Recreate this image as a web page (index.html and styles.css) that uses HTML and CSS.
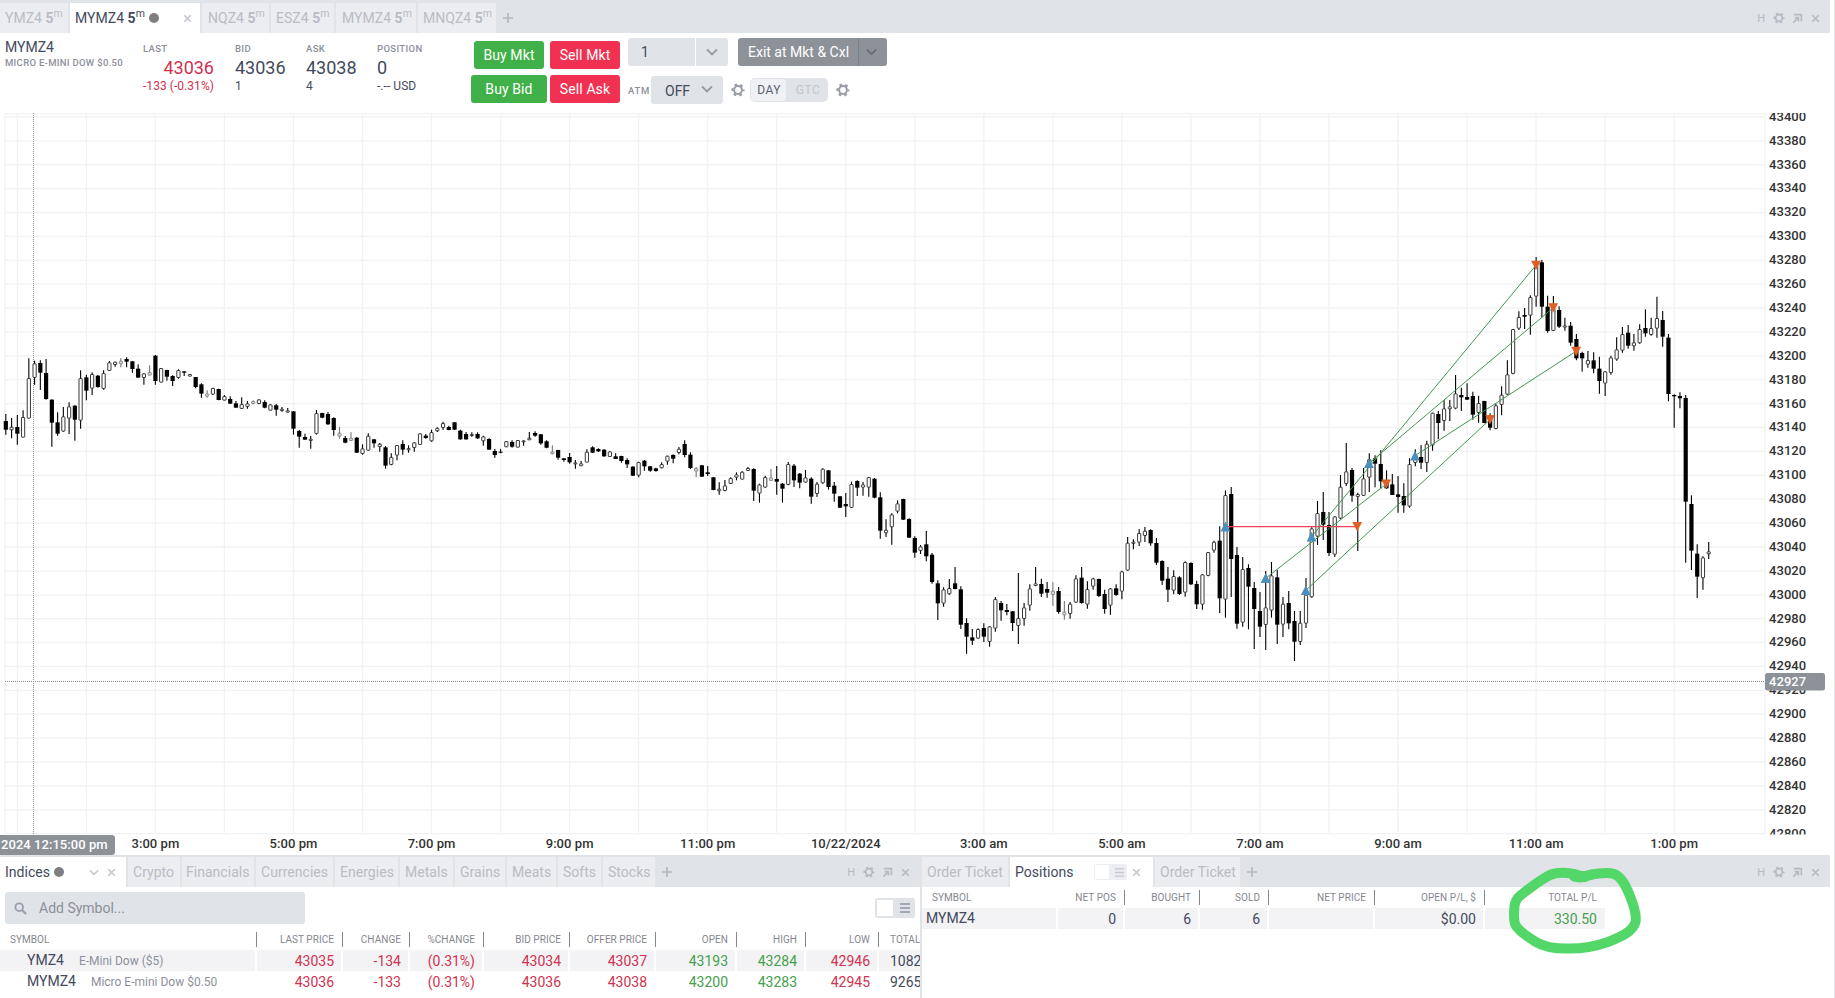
FILE: index.html
```html
<!DOCTYPE html>
<html lang="en">
<head>
<meta charset="utf-8">
<title>MYMZ4 – Trading workspace</title>
<link rel="stylesheet" href="styles.css">
</head>
<body>
<svg width="0" height="0" class="defs">
  <defs>
    <symbol id="gear" viewBox="0 0 14 14"><circle cx="7" cy="7" r="3.9" fill="none" stroke="currentColor" stroke-width="2"/><circle cx="7" cy="7" r="5.6" fill="none" stroke="currentColor" stroke-width="2" stroke-dasharray="2.8 3.064" stroke-dashoffset="1.4"/></symbol>
    <symbol id="popout" viewBox="0 0 12 12"><path d="M2 1.8h8.2V9M1.5 10.5L6.8 5.2M2.8 5h4.2v4.2" fill="none" stroke="currentColor" stroke-width="1.8"/></symbol>
    <symbol id="close" viewBox="0 0 10 10"><path d="M1.4 1.4l7.2 7.2M8.6 1.4L1.4 8.6" fill="none" stroke="currentColor" stroke-width="1.9"/></symbol>
    <symbol id="plus" viewBox="0 0 12 12"><path d="M6 1v10M1 6h10" fill="none" stroke="currentColor" stroke-width="1.7"/></symbol>
    <symbol id="chev" viewBox="0 0 12 8"><path d="M1 1.3l5 5 5-5" fill="none" stroke="currentColor" stroke-width="1.9"/></symbol>
    <symbol id="menu" viewBox="0 0 10 10"><path d="M0 1h10M0 5h10M0 9h10" fill="none" stroke="currentColor" stroke-width="1.5"/></symbol>
    <symbol id="search" viewBox="0 0 14 14"><circle cx="5.6" cy="5.6" r="4.1" fill="none" stroke="currentColor" stroke-width="2"/><path d="M8.6 8.6l4.4 4.4" stroke="currentColor" stroke-width="2.3"/></symbol>
  </defs>
</svg>

<div class="app">
  <div class="tabbar tabbar-top">
    <div class="tab t-ymz">YMZ4 <b>5</b><sup>m</sup></div>
    <div class="tab active t-mymz">MYMZ4 <b>5</b><sup>m</sup><i class="dot"></i><svg class="x"><use href="#close"/></svg></div>
    <div class="tab t-nqz">NQZ4 <b>5</b><sup>m</sup></div>
    <div class="tab t-esz">ESZ4 <b>5</b><sup>m</sup></div>
    <div class="tab t-mym2">MYMZ4 <b>5</b><sup>m</sup></div>
    <div class="tab t-mnq">MNQZ4 <b>5</b><sup>m</sup></div>
    <svg class="plus"><use href="#plus"/></svg>
    <div class="tools"><span>H</span><svg class="g"><use href="#gear"/></svg><svg class="p"><use href="#popout"/></svg><svg class="c"><use href="#close"/></svg></div>
  </div>

  <div class="header">
    <div class="instrument"><div class="name">MYMZ4</div><div class="desc">MICRO E-MINI DOW $0.50</div></div>
    <div class="quote q-last"><label>LAST</label><strong>43036</strong><span>-133 (-0.31%)</span></div>
    <div class="quote q-bid"><label>BID</label><strong>43036</strong><span>1</span></div>
    <div class="quote q-ask"><label>ASK</label><strong>43038</strong><span>4</span></div>
    <div class="quote q-pos"><label>POSITION</label><strong>0</strong><span>-.-- USD</span></div>
    <div class="orders buy"><button class="short">Buy Mkt</button><button>Buy Bid</button></div>
    <div class="orders sell"><button>Sell Mkt</button><button>Sell Ask</button></div>
    <div class="controls">
      <div class="row">
        <div class="qty"><span>1</span><em><svg class="chev"><use href="#chev"/></svg></em></div>
        <div class="exit"><span>Exit at Mkt &amp; Cxl</span><em><svg class="chev"><use href="#chev"/></svg></em></div>
      </div>
      <div class="row">
        <span class="atm">ATM</span>
        <div class="select"><span>OFF</span><svg class="chev"><use href="#chev"/></svg></div>
        <svg class="gear first"><use href="#gear"/></svg>
        <div class="tif"><span class="on">DAY</span><span>GTC</span></div>
        <svg class="gear second"><use href="#gear"/></svg>
      </div>
    </div>
  </div>

  <svg class="chart" id="chart" viewBox="0 113 1830 742" width="1830" height="742"></svg>

  <div class="bottom">
    <section class="watch">
      <div class="tabbar">
        <div class="tab active b-ind">Indices<i class="dot"></i><svg class="chev"><use href="#chev"/></svg><svg class="x"><use href="#close"/></svg></div>
        <div class="tab b-cry">Crypto</div>
        <div class="tab b-fin">Financials</div>
        <div class="tab b-cur">Currencies</div>
        <div class="tab b-ene">Energies</div>
        <div class="tab b-met">Metals</div>
        <div class="tab b-gra">Grains</div>
        <div class="tab b-mea">Meats</div>
        <div class="tab b-sof">Softs</div>
        <div class="tab b-sto">Stocks</div>
        <svg class="plus"><use href="#plus"/></svg>
        <div class="tools"><span>H</span><svg class="g"><use href="#gear"/></svg><svg class="p"><use href="#popout"/></svg><svg class="c"><use href="#close"/></svg></div>
      </div>
      <div class="searchrow">
        <div class="search"><svg><use href="#search"/></svg>Add Symbol...</div>
        <div class="toggle"><i></i><svg><use href="#menu"/></svg></div>
      </div>
      <div class="grid wgrid head">
        <div class="first">SYMBOL</div><div>LAST PRICE</div><div>CHANGE</div><div>%CHANGE</div><div>BID PRICE</div><div>OFFER PRICE</div><div>OPEN</div><div>HIGH</div><div>LOW</div><div class="last">TOTAL</div>
      </div>
      <div class="grid wgrid body shaded">
        <div class="first">YMZ4<small>E-Mini Dow ($5)</small></div><div class="red">43035</div><div class="red">-134</div><div class="red">(0.31%)</div><div class="red">43034</div><div class="red">43037</div><div class="green">43193</div><div class="green">43284</div><div class="red">42946</div><div class="last">1082</div>
      </div>
      <div class="grid wgrid body">
        <div class="first">MYMZ4<small>Micro E-mini Dow $0.50</small></div><div class="red">43036</div><div class="red">-133</div><div class="red">(0.31%)</div><div class="red">43036</div><div class="red">43038</div><div class="green">43200</div><div class="green">43283</div><div class="red">42945</div><div class="last">9265</div>
      </div>
    </section>
    <section class="positions">
      <div class="tabbar">
        <div class="tab p-ot1">Order Ticket</div>
        <div class="tab active p-pos">Positions<span class="toggle mini"><i></i><svg><use href="#menu"/></svg></span><svg class="x"><use href="#close"/></svg></div>
        <div class="tab p-ot2">Order Ticket</div>
        <svg class="plus"><use href="#plus"/></svg>
        <div class="tools"><span>H</span><svg class="g"><use href="#gear"/></svg><svg class="p"><use href="#popout"/></svg><svg class="c"><use href="#close"/></svg></div>
      </div>
      <div class="grid pgrid head">
        <div class="first">SYMBOL</div><div>NET POS</div><div>BOUGHT</div><div>SOLD</div><div>NET PRICE</div><div>OPEN P/L, $</div><div class="last">TOTAL P/L</div>
      </div>
      <div class="grid pgrid body shaded">
        <div class="first">MYMZ4</div><div>0</div><div>6</div><div>6</div><div></div><div>$0.00</div><div class="last green">330.50</div>
      </div>
    </section>
  </div>
</div>

<svg class="marker" viewBox="1500 860 150 100" width="150" height="100">
  <path d="M1514.5 906C1515 901 1517 898 1521 895C1530 888 1540 880 1549 875.5C1556 872 1565 872.6 1571 873.4C1577 874 1580 876.5 1584 876C1590 875 1604 871.500 1613 873.600C1621 875.500 1626 886 1630 896C1634 906 1637 915 1635.500 922C1633 932 1620 937 1608 942C1594 947 1579 948.800 1567 948.600C1553 948.600 1544 947 1536 942C1528 937 1518 930 1515.500 925C1513 920 1514.200 911 1514.500 906Z" fill="none" stroke="#53d769" stroke-width="10" stroke-linejoin="round"/>
  <path d="M1574 876.500Q1582 879 1592 874.500" fill="none" stroke="#53d769" stroke-width="10" stroke-linecap="round"/>
</svg>
<script src="chart.js"></script>
</body>
</html>
```

FILE: styles.css
```css
* { box-sizing: border-box; }
html, body { margin: 0; height: 998px; overflow: hidden; }
body { width: 1835px; background: #fff; font-family: Roboto, "Liberation Sans", sans-serif; font-size: 14px; color: #434a5c; border-right: 1px solid #e2e4ea; }
svg { display: block; flex: none; }
.defs { position: absolute; }
.app { width: 1830px; height: 998px; overflow: hidden; }

/* tab bars */
.tabbar { display: flex; align-items: flex-end; height: 32px; background: #e0e3e8; gap: 2px; color: #b9bcc4; }
.tabbar-top { height: 33px; }
.tab { height: 30px; display: flex; align-items: center; padding-left: 6px; background: #ecedf0; flex: none; letter-spacing: .03px; white-space: pre; }
.tab b { font-weight: 700; }
.tab sup { font-size: 10.5px; line-height: 1; position: relative; top: -4px; vertical-align: baseline; }
.tab.active { background: #fff; color: #434a5c; padding-left: 5px; }
.dot { width: 10px; height: 10px; border-radius: 50%; background: #7f7f7f; margin-left: 4px; }
.tab .x { width: 9px; height: 9px; color: #c4c7ce; margin-left: auto; }
.tab .chev { width: 10px; height: 7px; color: #c4c7ce; margin-left: auto; }
.plus { width: 12px; height: 12px; color: #b4b8c0; margin: 0 0 9px 4px; }
.tools { margin-left: auto; height: 30px; display: flex; align-items: center; color: #b6bac5; font-size: 11px; padding-right: 10px; }
.tools .g { width: 12px; height: 12px; margin-left: 8px; }
.tools .p { width: 11px; height: 11px; margin-left: 7px; }
.tools .c { width: 9px; height: 9px; margin-left: 8px; }
.t-ymz { width: 68px; padding-left: 5px; }
.t-mymz { width: 130px; padding-right: 8px; }
.t-nqz { width: 67px; }
.t-esz { width: 63px; padding-left: 5px; }
.t-mym2 { width: 80px; }
.t-mnq { width: 78px; padding-left: 5px; }

/* quote header */
.header { height: 80px; display: flex; }
.instrument { width: 143px; padding: 6px 0 0 5px; white-space: nowrap; }
.name { line-height: 16px; }
.desc { font-size: 9.5px; line-height: 12px; margin-top: 2px; letter-spacing: .31px; color: #8d909b; font-weight: 500; }
.quote { display: flex; flex-direction: column; white-space: nowrap; padding-top: 10px; }
.quote label { font-size: 9.5px; line-height: 12px; letter-spacing: .35px; color: #8d909b; font-weight: 500; }
.quote strong { font-size: 18px; line-height: 20px; font-weight: 400; margin-top: 3px; }
.quote span { font-size: 12px; line-height: 14px; margin-top: 1px; letter-spacing: .05px; }
.q-last { width: 71px; margin-right: 21px; color: #d0324f; }
.q-last strong { text-align: right; }
.q-bid { width: 71px; }
.q-ask { width: 71px; }
.q-pos { width: 94px; }
.orders { display: flex; flex-direction: column; align-items: center; gap: 6px; padding-top: 8px; margin-right: 3px; }
.orders button { font: 14px Roboto, sans-serif; letter-spacing: .1px; color: #fff; border: 0; border-radius: 3px; height: 28px; width: 76px; padding: 0; background: #3fb148; }
.orders button.short { width: 70px; }
.orders.sell button { width: 70px; background: #f03152; }
.controls { display: flex; flex-direction: column; gap: 10px; padding: 5px 0 0 5px; }
.row { display: flex; align-items: center; height: 28px; }
.qty, .exit { display: flex; height: 28px; border-radius: 3px; overflow: hidden; line-height: 28px; }
.qty { width: 100px; background: #e0e3e8; margin-right: 10px; }
.qty span { width: 68px; padding-left: 13px; border-right: 1px solid #fff; }
.qty em, .exit em { flex: 1; display: flex; align-items: center; justify-content: center; }
.chev { width: 12px; height: 8px; }
.qty .chev, .select .chev { color: #9599a4; }
.exit { width: 149px; background: #8d9198; color: #fff; }
.exit span { width: 121px; padding-left: 10px; border-right: 1px solid #7c8088; white-space: nowrap; }
.exit em { padding-right: 3px; }
.exit .chev { color: #646977; width: 11px; }
.atm { width: 23px; font-size: 9.5px; letter-spacing: .8px; font-weight: 500; color: #8d909b; }
.select { width: 72px; height: 28px; border-radius: 3px; background: #e0e3e8; display: flex; align-items: center; justify-content: space-between; padding: 2px 10px 0 14px; }
.select .chev { margin-top: -4px; }
.gear { width: 14px; height: 14px; color: #989ca6; }
.gear.first { margin: 0 5px 0 8px; }
.gear.second { margin-left: 8px; }
.tif { width: 78px; height: 24px; border-radius: 5px; background: #e0e3e8; display: flex; padding: 1px; font-size: 12px; line-height: 22px; letter-spacing: .5px; color: #c3c6ce; }
.tif span { width: 35px; text-align: center; }
.tif span + span { width: 41px; padding-left: 3px; }
.tif .on { background: #f0f1f4; border-radius: 4px; color: #5a6070; padding-left: 1px; }

/* chart */
.chart { font-family: Roboto, sans-serif; font-size: 13px; font-weight: 500; }
.gridline { stroke: #f1f2f3; stroke-width: 1.3; }
.cross { stroke: #8d8d8d; stroke-width: 1; stroke-dasharray: 1 1; }
.wick { stroke: #000; stroke-width: 1.1; }
.solid { fill: #000; }
.hollow { fill: #fff; stroke: #222; stroke-width: .9; }
.faint { fill: #ddd; stroke: #777; stroke-width: .8; }
.wick.pale { stroke: #777; }
.win { stroke: #439652; stroke-width: 1; }
.loss { stroke: #f0405a; stroke-width: 1.2; }
.entry { fill: #4a8fbd; }
.exitmark { fill: #dd6026; }
.axis { fill: #333; letter-spacing: .05px; }
.time { text-anchor: middle; }
.tag { fill: #8d9198; }
.tagtext { fill: #fff; letter-spacing: .05px; }

/* bottom panels */
.bottom { display: flex; height: 143px; }
.watch { width: 922px; border-right: 2px solid #e0e3e8; overflow: hidden; }
.positions { width: 908px; }
.b-ind { width: 126px; padding-right: 10px; }
.b-ind .x { margin-left: 8px; }
.b-ind .dot { margin-left: 4px; }
.b-cry { width: 52px; padding-left: 5px; }
.b-fin { width: 72px; padding-left: 4px; }
.b-cur { width: 77px; padding-left: 5px; }
.b-ene { width: 63px; padding-left: 5px; }
.b-met { width: 53px; padding-left: 5px; }
.b-gra { width: 50px; padding-left: 5px; }
.b-mea { width: 49px; padding-left: 5px; }
.b-sof { width: 43px; padding-left: 5px; }
.b-sto { width: 52px; padding-left: 5px; }
.p-ot1 { width: 86px; padding-left: 5px; }
.p-pos { width: 143px; padding-right: 12px; }
.p-ot2 { width: 85px; padding-left: 5px; }
.searchrow { display: flex; justify-content: space-between; align-items: center; height: 42px; padding: 0 5px; }
.search { width: 300px; height: 32px; border-radius: 3px; background: #e0e3e8; color: #8c8f99; display: flex; align-items: center; gap: 12px; padding-left: 9px; letter-spacing: 0; }
.search svg { width: 13px; height: 13px; color: #9a9daa; }
.toggle { width: 40px; height: 20px; background: #e0e3e8; border-radius: 2px; display: flex; align-items: center; padding: 2px; gap: 7px; }
.toggle i { width: 16px; height: 16px; background: #fff; }
.toggle svg { width: 10px; height: 10px; color: #8e92a6; }
.toggle.mini { width: 33px; height: 16px; background: #eceef2; padding: 1px; gap: 6px; margin-left: 20px; }
.toggle.mini i { width: 14px; height: 14px; }
.toggle.mini svg { width: 9px; height: 9px; color: #c4c7d2; }
.grid { display: grid; white-space: nowrap; }
.wgrid { grid-template-columns: 257px 86px 67px 74px 86px 86px 81px 69px 73px 41px; }
.pgrid { grid-template-columns: 136px 67px 75px 69px 106px 110px 120px; }
.grid > div { text-align: right; }
.grid .first { text-align: left; }
.head { font-size: 10px; color: #85878f; letter-spacing: .05px; height: 21px; }
.head > div { border-right: 1px solid #85878f; height: 15px; line-height: 16px; margin-top: 3px; padding-right: 8px; }
.head .last { border: 0; }
.wgrid.head .first, .pgrid.head .first { padding-left: 10px; }
.pgrid.head .first { border: 0; }
.body > div { height: 21px; line-height: 23px; border-right: 2px solid #fff; padding-right: 7px; }
.body .first { padding-left: 27px; line-height: 21px; }
.body small { font-size: 12px; color: #8d909b; margin-left: 15px; letter-spacing: 0; }
.shaded > div { background: #f3f3f6; }
.pgrid.body .first { padding-left: 4px; }
.wgrid .last { text-align: left; padding: 0 0 0 11px; overflow: hidden; border: 0; }
.pgrid .last { border: 0; padding-right: 8px; }
.red { color: #d0324f; }
.green { color: #44a04c; }

/* hand-drawn highlight */
.marker { position: absolute; left: 1500px; top: 860px; }
```

FILE: chart.js
```js
// Bars: body/wick levels as [high, top, bottom, low, kind]; f = filled, o = hollow, g = faint.
// Levels are in thirds of a pixel below each run's vertical origin.
const runs = [
  { start: -26, y: 330, bars: `252 273 299 314 f,264 291 300 325 o,255 291 311 344 f,241 262 322 322 o,85 145 265 265 o,92 101 143 164 o,91 99 128 180 f,87 129 207 209 f,208 209 278 350 f,247 277 311 317 f,231 260 304 305 o,217 230 265 312 o,226 227 269 332 f,121 145 271 296 o,134 142 182 211 f,127 133 175 195 o,135 137 171 173 f,121 130 176 179 o,93 98 122 122 o,95 96 104 110 o,84 93 102 112 g,82 87 95 112 f,93 94 117 128 f,103 116 143 143 f,130 131 143 164 o,106 127 136 136 g,75 77 153 164 f,115 115 157 157 o,119 120 140 152 f,136 138 153 168 f,118 121 143 146 o,124 124 128 138 f,133 133 139 139 o,141 141 171 175 f,160 163 191 203 f,181 191 199 203 g,173 175 193 194 o,176 177 210 211 f,195 199 211 211 o,199 207 221 222 f,213 220 233 233 f,202 223 236 236 o,213 221 230 236 o,211 214 221 223 g,208 209 221 223 o,211 216 233 235 f,223 224 241 241 o,222 226 239 257 f,231 237 242 245 o,234 242 247 247 o,243 244 296 314 f,300 303 320 353 f,311 321 329 329 f,318 327 332 356 o,240 250 311 314 o,248 249 263 265 f,246 252 283 284 f,262 264 300 317 f,291 309 319 326 g,318 324 338 340 f,307 324 332 332 g,321 323 368 369 f,343 356 371 374 o,310 318 361 362 o,327 328 340 353 f,339 342 350 365 o,348 352 407 416 f,370 382 404 406 o,345 346 376 391 o,331 342 359 374 f,346 355 360 368 o,336 338 353 365 o,310 311 344 344 o,312 317 324 326 f,299 307 333 335 o,292 295 303 306 o,275 280 293 300 o,287 291 300 301 f,276 277 299 300 f,299 302 328 329 f,306 312 328 329 f,307 313 317 320 o,307 312 325 326 f` },
  { start: 57, y: 390, bars: `137 140 153 167 o,145 147 179 179 f,177 183 195 203 f,177 185 187 190 f,153 154 171 171 o,151 156 170 173 f,150 151 172 172 o,151 152 155 167 o,126 144 150 150 o,124 129 137 140 f,132 133 160 164 f,151 154 173 175 f,166 185 192 193 g,179 180 203 209 f,204 205 210 215 f,189 201 217 221 f,210 218 222 236 o,213 221 228 228 o,178 186 217 217 o,169 172 188 189 f,175 177 184 186 f,178 179 199 200 f,184 185 200 201 o,190 199 207 207 f,197 198 213 218 f,205 210 223 234 f,229 230 257 258 f,215 217 256 262 o,210 212 229 242 f,228 229 242 245 f,233 235 243 245 f,217 223 234 235 o,197 198 214 224 o,193 195 206 220 f,171 177 188 193 o,151 162 195 202 f,187 194 234 237 f,231 235 244 262 g,225 226 260 261 f,228 247 252 258 f,261 262 300 301 f,277 297 303 314 o,270 287 302 304 o,262 265 281 282 o,247 254 262 271 o,244 246 268 268 o,231 235 242 242 o,235 237 302 333 f,281 284 310 338 o,257 262 292 293 o,237 263 272 272 g,228 267 275 314 f,279 281 296 338 f,216 223 284 286 o,222 227 271 291 f,249 251 278 295 f,240 263 277 277 o,262 266 320 341 f,276 282 311 321 o,235 237 279 281 o,240 241 291 299 f,276 287 311 335 f,318 319 353 354 f,309 342 349 381 f,275 283 353 354 o,271 273 293 318 f,276 284 292 317 o,261 262 292 320 o,264 266 323 325 f,307 322 422 446 f,388 420 429 441 o,370 374 411 464 o,331 341 364 370 o,326 327 389 390 f,385 387 443 444 f,439 444 488 503 f,465 470 482 492 o,423 463 499 514 f,489 494 576 581 f,571 580 640 690 f` },
  { start: 137, y: 460, bars: `382 389 430 440 o,357 385 402 404 o,321 370 387 388 f,379 388 494 507 f,475 489 530 581 f,507 532 542 555 f,505 508 535 536 o,490 504 530 546 f,498 500 545 560 o,411 418 505 515 o,423 429 451 482 f,432 450 456 466 f,453 454 489 513 f,339 475 497 552 o,429 443 476 497 o,373 386 436 452 o,321 371 377 379 o,356 372 401 411 f,366 387 398 413 f,367 393 404 437 g,381 393 456 461 f,423 456 465 479 g,426 432 461 476 o,346 356 427 428 o,321 353 429 431 f,364 388 433 446 o,353 356 379 389 o,356 357 408 411 f,389 402 447 461 f,384 386 436 464 o,373 385 405 407 f,332 335 394 418 o,231 249 331 332 o,238 246 251 268 o,207 220 247 258 o,201 213 227 246 o,208 210 250 257 f,234 249 308 315 f,301 303 362 375 f,321 356 389 426 f,331 349 391 403 o,349 352 402 405 f,304 307 397 410 o,307 309 373 375 f,362 372 433 447 f,342 344 433 449 o,276 277 347 349 o,242 246 271 278 o,199 242 415 459 f,91 106 418 473 o,81 102 297 411 f,261 285 491 506 f,291 328 487 500 o,313 324 380 508 f,366 384 447 567 f,396 453 500 531 f,333 443 494 570 o,306 347 451 473 o,330 352 494 552 f,411 432 493 531 o,393 429 490 508 f,453 483 545 603 f,453 489 545 555 o,354 405 490 504 o,202 206 411 413 o,123 160 229 255 o,96 156 194 240 f,156 195 279 288 f,169 170 283 291 o,45 81 175 177 o` },
  { start: 207, y: 240, bars: `609 695 731 738 o,684 690 767 785 f,758 763 770 933 o,684 716 767 768 o,640 658 712 756 o,646 655 671 742 f,631 672 724 746 f,691 722 745 747 f,702 733 765 765 f,708 763 771 818 f,730 768 796 818 f,655 673 799 803 o,628 645 668 679 o,615 651 668 687 f,602 612 668 696 o,518 519 615 632 o,513 522 549 598 f,481 506 542 572 o,480 500 507 543 o,405 461 505 508 o,443 465 472 513 f,430 471 479 479 f,455 468 524 539 f,467 490 518 548 o,482 483 549 550 f,520 535 563 571 f,491 497 566 568 o,439 465 494 526 o,361 404 463 465 o,267 268 401 403 o,214 232 265 270 o,204 225 230 267 f,166 172 226 284 o,51 75 169 200 o,60 67 200 232 f,167 200 273 278 f,168 205 272 273 o,199 210 260 264 f,233 257 262 272 o,246 257 308 317 f,282 297 355 361 f,335 339 355 395 f,333 361 373 383 o,337 361 386 400 f,350 386 423 461 f,393 395 430 468 o,347 353 398 404 o,292 329 358 362 o,261 283 331 338 o,255 278 317 326 f,282 308 318 332 o,253 268 309 311 o,208 264 280 290 f,233 265 284 287 o,170 235 265 293 o,213 240 290 320 f,282 293 462 484 f,463 465 469 563 f,457 468 475 505 f,465 474 785 968 f,766 792 932 990 f,913 941 1010 1074 f,949 953 1014 1049 o,906 935 942 957 o` }
];

const BAR = 5.753, ORIGIN = 155.4;
const TOP = 116.9, STEP = 23.893;
let out = '<defs><clipPath id="plot"><rect x="0" y="113" width="1830" height="721.5"/></clipPath></defs>';
const line = (x1, y1, x2, y2, c) => `<line class="${c}" x1="${x1}" y1="${y1}" x2="${x2}" y2="${y2}"/>`;

// grid
out += line(5, 113, 5, 833.5, 'gridline') + line(5, 113.5, 1765, 113.5, 'gridline');
for (let h = -2; h <= 22; h++) {
  const x = (ORIGIN + h * BAR * 12).toFixed(1);
  out += line(x, 113, x, 833.5, 'gridline');
}
for (let i = 0; i <= 30; i++) {
  const y = (TOP + i * STEP).toFixed(1);
  out += line(5, y, 1765, y, 'gridline');
}
out += line(1765, 113, 1765, 833.5, 'gridline');

// crosshair
out += line(33.5, 113, 33.5, 835, 'cross') + line(5, 681.5, 1765, 681.5, 'cross');

// candles
for (const run of runs) {
  run.bars.split(',').forEach((s, n) => {
    const p = s.split(' '), kind = p[4];
    const [h, t, b, l] = p.slice(0, 4).map(v => run.y + v / 3);
    const x = ORIGIN + (run.start + n) * BAR;
    const w = kind === 'g' ? 'wick pale' : 'wick';
    out += line(x, h, x, Math.max(l, b), w);
    if (kind === 'f') out += `<rect class="solid" x="${x - 2.1}" y="${t}" width="4.200" height="${Math.max(b - t, 1)}"/>`;
    else out += `<rect class="${kind === 'g' ? 'faint' : 'hollow'}" x="${x - 1.6}" y="${t + .2}" width="3.200" height="${Math.max(b - t - .4, 1)}" rx=".4"/>`;
  });
}

// trades: entry x, y, exit x, y
const trades = [
  [1225.4, 526.6, 1357.2, 526.6, 'loss'], [1265.6, 578.3, 1386.2, 484, 'win'], [1305.8, 590.3, 1490, 419.5, 'win'],
  [1311.5, 536.7, 1536, 265.2, 'win'], [1369, 463.3, 1553.2, 307.8, 'win'], [1415, 455.7, 1576.2, 351.2, 'win']
];
for (const [a, b, c, d, k] of trades) out += line(a, b, c, d, k);
for (const [x, y, u, v] of trades) {
  out += `<path class="entry" d="M${x} ${y - 5}l4.900 9.800h-9.800z"/><path class="exitmark" d="M${u} ${v + 5}l4.900 -9.500h-9.800z"/>`;
}

// axes
out += '<g clip-path="url(#plot)">';
for (let i = 0; i <= 30; i++) out += `<text class="axis" x="1769" y="${TOP + i * STEP + 3.900}">${43400 - i * 20}</text>`;
out += '</g>';
['3:00 pm', '5:00 pm', '7:00 pm', '9:00 pm', '11:00 pm', '10/22/2024', '3:00 am', '5:00 am', '7:00 am', '9:00 am', '11:00 am', '1:00 pm'].forEach((t, i) => {
  out += `<text class="axis time" x="${ORIGIN + i * BAR * 24}" y="848">${t}</text>`;
});
out += '<path class="tag" d="M0 835h112a3 3 0 0 1 3 3v14a3 3 0 0 1 -3 3H0z"/><text class="tagtext" x="1" y="849">2024 12:15:00 pm</text>';
out += '<rect class="tag" x="1765" y="673" width="60" height="17.500" rx="2.500"/><text class="tagtext" x="1769" y="685.500">42927</text>';
document.getElementById('chart').innerHTML = out;
```
